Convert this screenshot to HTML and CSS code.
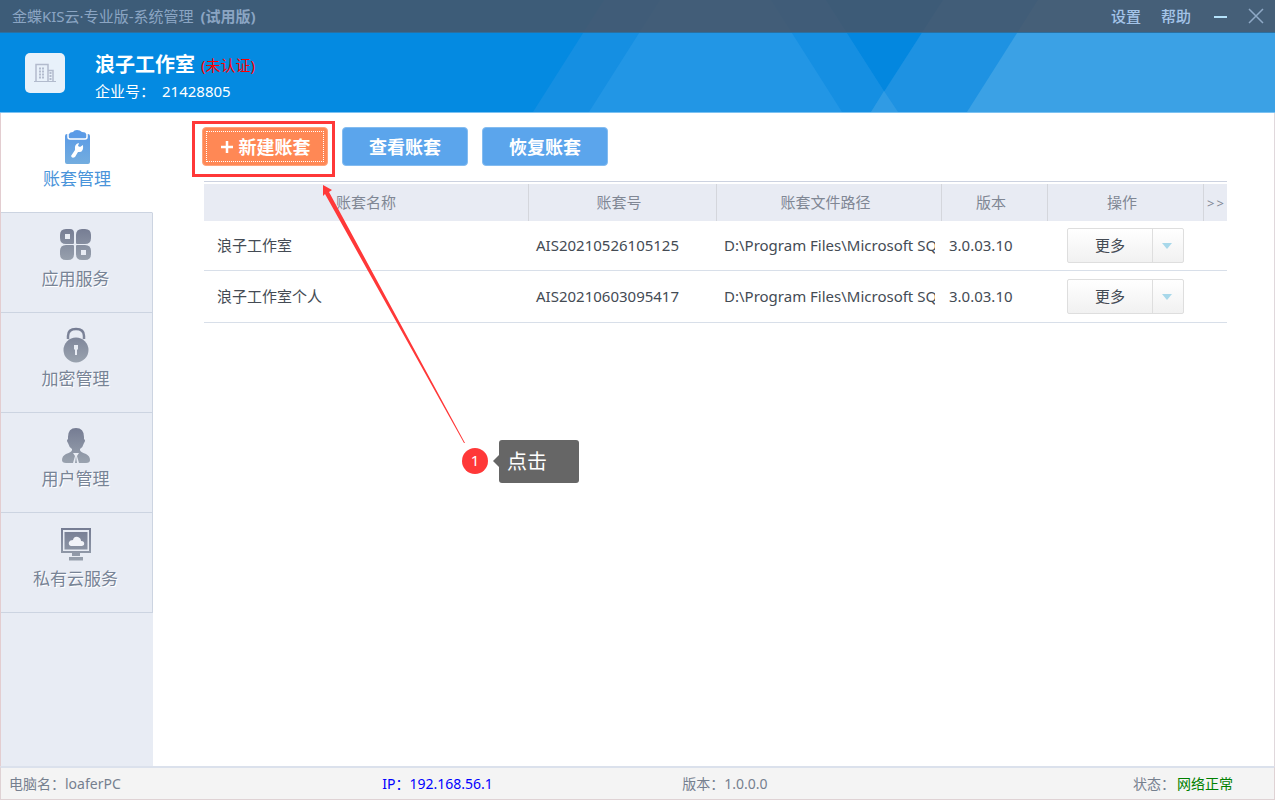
FILE: index.html
```html
<!DOCTYPE html>
<html lang="zh-CN">
<head>
<meta charset="utf-8">
<title>金蝶KIS云·专业版-系统管理</title>
<link rel="stylesheet" href="styles.css">
</head>
<body>
<div class="app">
  <header class="header">
    <svg class="header-art" viewBox="0 0 1275 112" preserveAspectRatio="xMaxYMid slice" aria-hidden="true">
      <polygon points="604,0 826,0 898,112 533,112" fill="#158fe2"/>
      <polygon points="660,0 771,0 842,112 589,112" fill="#2296e5"/>
      <polygon points="826,0 943,0 884,91" fill="#0387df"/>
      <polygon points="943,0 1275,0 1275,112 871,112" fill="#1e92e2"/>
      <polygon points="884,91 898,112 871,112" fill="#309be4"/>
      <polygon points="1038,0 1275,0 1275,112 967,112" fill="#3ba1e5"/>
    </svg>
    <div class="titlebar">
      <div class="title">金蝶KIS云·专业版-系统管理<b class="trial">(试用版)</b></div>
      <nav class="window-menu">
        <button class="menu-button">设置</button>
        <button class="menu-button">帮助</button>
        <button class="window-button" aria-label="最小化"><svg width="16" height="16"><path d="M1 9h13" stroke="#b5e2fa" stroke-width="2"/></svg></button>
        <button class="window-button close" aria-label="关闭"><svg width="16" height="16"><path d="M1 1l14 14M15 1L1 15" stroke="#8fa9c6" stroke-width="1.5"/></svg></button>
      </nav>
    </div>
    <div class="company">
      <div class="company-logo">
        <svg width="22" height="20" viewBox="0 0 22 20" fill="none" stroke="#b2bbcd"><path d="M2 18V1.500h12V18M14 7.500h5V18" stroke-width="1.500"/><path d="M0 18.500h22"/><path d="M5 5.500h6M5 8.500h6M5 11.500h6M5 14.500h6" stroke-width="2" stroke-dasharray="2 1"/><path d="M16.500 9v2M16.500 12v2M16.500 15v2" stroke-width="2"/></svg>
      </div>
      <div>
        <h1 class="company-name">浪子工作室<span class="unverified">(未认证)</span></h1>
        <div class="company-id"><span>企业号：</span><span>21428805</span></div>
      </div>
    </div>
  </header>

  <div class="body">
    <svg width="0" height="0" class="defs" aria-hidden="true"><defs>
      <linearGradient id="steel" x1="0" y1="0" x2="0" y2="36" gradientUnits="userSpaceOnUse"><stop offset="0" stop-color="#747b92"/><stop offset="1" stop-color="#9aa3af"/></linearGradient>
      <linearGradient id="azure" x1="0" y1="0" x2="0" y2="1"><stop offset="0" stop-color="#5b9be6"/><stop offset="1" stop-color="#73addf"/></linearGradient>
    </defs></svg>
    <nav class="sidebar">
      <button class="side-item active">
        <svg width="36" height="36" viewBox="0 0 36 36"><path d="M7 4h22q2 0 2 2v26q0 2-2 2H8q-2 0-2-2V6q0-2 2-2" fill="url(#azure)"/><path d="M9 3v4q0 2 2 2h15q2 0 2-2V3" fill="none" stroke="#fff" stroke-width="1.500"/><path d="M10 6V4q1-2 4-2 1-2 4-2t5 2q4 0 4 2v2q-1 1-2 1H12q-2 0-2-1z" fill="#5b9be6"/><path d="M20 13q-5 1-4 7l-4 6q1 3 4 1l3-5q6 1 5-7l-3 2-2-1 1-3z" fill="#fff"/></svg>
        <span>账套管理</span>
      </button>
      <button class="side-item">
        <svg width="36" height="36" viewBox="0 0 36 36" fill="url(#steel)"><path fill-rule="evenodd" d="M8 2h4q4 0 4 4v10q0 1-1 1H8q-6 0-6-6V8q0-6 6-6zm-1 5v5h5V7z"/><path d="M18 16V8q0-6 6-6h3q6 0 6 6v3q0 6-6 6h-8q-1 0-1-1z"/><path d="M16 19v8q0 6-6 6H8q-6 0-6-6v-3q0-6 6-6h7q1 0 1 1z"/><path fill-rule="evenodd" d="M18 19q0-1 1-1h8q6 0 6 6v3q0 6-6 6h-3q-6 0-6-6zm5 4v5h5v-5z"/></svg>
        <span>应用服务</span>
      </button>
      <button class="side-item">
        <svg width="36" height="36" viewBox="0 0 36 36"><path d="M10 12V9q0-7 8-7t8 7v3" fill="none" stroke="url(#steel)" stroke-width="2.500"/><circle cx="18" cy="23" r="12.500" fill="url(#steel)"/><path d="M16 18h4v4l-1 1v5h-2v-5l-1-1z" fill="#e8ecf4"/></svg>
        <span>加密管理</span>
      </button>
      <button class="side-item">
        <svg width="36" height="36" viewBox="0 0 36 36"><path d="M18 1q8 0 8 9v2q2 1 0 4-1 4-4 6v1q0 2 6 4 4 2 4 6 0 3-4 3H8q-4 0-4-3 0-4 4-6 6-2 6-4v-1q-3-2-4-6-2-3 0-4v-2q0-9 8-9z" fill="url(#steel)"/><path d="M15 26h6l-2 3 2 7h-6l2-7z" fill="#e8ecf4"/><path d="M18 29l1 7h-2z" fill="#9aa3af"/></svg>
        <span>用户管理</span>
      </button>
      <button class="side-item">
        <svg width="36" height="36" viewBox="0 0 36 36"><path d="M4 2h28v23H4z" fill="none" stroke="url(#steel)" stroke-width="2"/><path d="M6.500 5h23v17.500h-23z" fill="url(#steel)"/><path d="M13 19q-3-1-2-4 1-2 4-2 1-4 5-3 3 1 3 4 4 0 3 4l-2 1z" fill="#f1f3f8"/><path d="M14 26h8v3h-8zM11 30h14v3.500H11z" fill="url(#steel)"/></svg>
        <span>私有云服务</span>
      </button>
    </nav>

    <main class="content">
      <div class="toolbar">
        <button class="action primary"><svg width="14" height="14"><path d="M7 1v12M1 7h12" stroke="#fff" stroke-width="2.500"/></svg>新建账套</button>
        <button class="action">查看账套</button>
        <button class="action">恢复账套</button>
      </div>
      <div class="table-wrap">
        <table class="accounts">
          <colgroup><col class="c-name"><col class="c-id"><col class="c-path"><col class="c-version"><col class="c-action"><col class="c-more"></colgroup>
          <thead><tr><th>账套名称</th><th>账套号</th><th>账套文件路径</th><th>版本</th><th>操作</th><th class="expand">&gt;&thinsp;&gt;</th></tr></thead>
          <tbody>
            <tr><td>浪子工作室</td><td>AIS20210526105125</td><td><div class="clip">D:\Program Files\Microsoft SQ</div></td><td>3.0.03.10</td><td colspan="2"><div class="split"><button class="split-main">更多</button><button class="split-arrow" aria-label="展开"><svg width="10" height="6"><path d="M0 0h10L5 6z" fill="#a8d8ea"/></svg></button></div></td></tr>
            <tr><td>浪子工作室个人</td><td>AIS20210603095417</td><td><div class="clip">D:\Program Files\Microsoft SQ</div></td><td>3.0.03.10</td><td colspan="2"><div class="split"><button class="split-main">更多</button><button class="split-arrow" aria-label="展开"><svg width="10" height="6"><path d="M0 0h10L5 6z" fill="#a8d8ea"/></svg></button></div></td></tr>
          </tbody>
        </table>
      </div>
    </main>
  </div>

  <footer class="status">
    <span>电脑名：loaferPC</span>
    <span class="ip">IP：192.168.56.1</span>
    <span>版本：1.0.0.0</span>
    <span class="network">状态：<span class="ok">网络正常</span></span>
  </footer>

  <div class="guide-box"></div>
  <svg class="guide-arrow" width="150" height="262" aria-hidden="true"><path d="M3 1L12 6 9 8 145 259 144 259 5 10 3 12z" fill="#ff3838"/></svg>
  <div class="guide-step">1</div>
  <div class="guide-tip">点击</div>
</div>
</body>
</html>
```
FILE: styles.css
```css
* { box-sizing: border-box; }
body {
  margin: 0;
  font: 15px/20px "Noto Sans", "Noto Sans CJK SC", sans-serif;
  color: #444b54;
}
button {
  font: inherit;
  color: inherit;
  margin: 0;
  padding: 0;
  border: 0;
  background: none;
}
.app {
  position: relative;
  display: flex;
  flex-direction: column;
  min-height: 100vh;
  background: #fff;
}
.app > .body { border-left: 1px solid #e3cdd0; border-right: 1px solid #e0d8dc; }

/* Header */
.header {
  position: relative;
  background: #048ae1;
  border-bottom: 1px solid #7cc2f2;
}
.header-art { position: absolute; top: 0; left: 0; width: 100%; height: 100%; }
.titlebar {
  position: relative;
  display: flex;
  justify-content: space-between;
  align-items: center;
  height: 33px;
  padding: 0 11px 0 12px;
  background: rgba(72, 84, 101, 0.85);
  border-bottom: 1px solid #2c6f9f;
  color: #8ba5c3;
}
.trial { margin-left: 7px; }
.window-menu { display: flex; align-items: center; color: #a4c4e8; }
.menu-button { margin-right: 20px; font-weight: 500; }
.menu-button + .window-button { margin-left: 2px; }
.window-button { display: flex; margin-right: 20px; }
.window-button.close { margin: 0 0 0 -1px; }
.company {
  position: relative;
  display: flex;
  gap: 30px;
  height: 79px;
  padding: 20px 25px 0;
  color: #fff;
}
.company-logo {
  display: flex;
  align-items: center;
  justify-content: center;
  width: 40px;
  height: 40px;
  border-radius: 5px;
  background: #e8f1fa;
}
.company-name {
  display: flex;
  align-items: center;
  margin: 0;
  font-size: 20px;
  line-height: 24px;
}
.unverified { margin-left: 6px; font-size: 15px; font-weight: 400; color: #f00; }
.company-id { display: flex; gap: 7px; margin-top: 4px; }

/* Sidebar */
.body { flex: 1; display: flex; }
.defs { position: absolute; }
.sidebar {
  display: flex;
  flex-direction: column;
  width: 152px;
  flex-shrink: 0;
  background: #e8ecf4;
}
.side-item {
  display: flex;
  flex-direction: column;
  align-items: center;
  gap: 3px;
  height: 100px;
  padding: 14px 2px 0 0;
  font-size: 17px;
  line-height: 26px;
  color: #788496;
  border-right: 1px solid #ccd4e1;
  border-bottom: 1px solid #ccd4e1;
}
.side-item span { text-shadow: 1px 1px 0 #fff; }
.side-item.active {
  padding: 17px 0 0 1px;
  gap: 0;
  background: #fff;
  border-right-color: #fff;
  color: #4a94da;
}

/* Content */
.content { flex: 1; min-width: 0; padding: 14px 47px 0 49px; }
.toolbar { display: flex; gap: 14px; }
.action {
  display: flex;
  align-items: center;
  justify-content: center;
  gap: 5px;
  width: 126px;
  height: 39px;
  padding-top: 1px;
  border: 1px solid #84bcf0;
  border-radius: 4px;
  background: #5ba5ec;
  color: #fff;
  font-size: 18px;
  font-weight: 700;
}
.action.primary {
  background: #ff8855;
  border-color: #ffa47c;
  outline: 1px dotted #fff;
  outline-offset: -5px;
}
.table-wrap { margin: 15px 0 0 2px; padding-top: 2px; border-top: 1px solid #ccd2e0; }
.accounts { width: 100%; table-layout: fixed; border-collapse: separate; border-spacing: 0; }
.c-name { width: 325px; }
.c-id { width: 188px; }
.c-path { width: 225px; }
.c-version { width: 106px; }
.c-more { width: 23px; }
.accounts th {
  height: 37px;
  padding: 0 7px 2px 0;
  background: #e8ebf3;
  border-right: 1px solid #d4d6dc;
  font-weight: 400;
  color: #808794;
}
.accounts th:first-child { padding: 0 0 2px; }
.accounts th.expand { padding: 0; border: 0; font-size: 13px; white-space: nowrap; }
.accounts td { height: 50px; padding: 0 7px 2px; border-bottom: 1px solid #d8dfe9; }
.accounts tr + tr td { height: 52px; }
.accounts td:first-child { padding-left: 13px; }
.accounts td:last-child { padding: 0 0 0 19px; }
.clip { overflow: hidden; white-space: nowrap; }
.split {
  display: flex;
  width: 117px;
  height: 35px;
  border: 1px solid #dedede;
  border-radius: 2px;
  background: linear-gradient(#fff, #f1f1f1);
}
.split-main { flex: 1; padding-bottom: 2px; }
.split-arrow {
  display: flex;
  align-items: center;
  justify-content: center;
  width: 31px;
  padding-right: 2px;
  border-left: 1px solid #dedede;
}

/* Status bar */
.status {
  display: grid;
  grid-template-columns: 30.500% 24.500% 1fr auto;
  align-items: center;
  height: 34px;
  padding: 0 41px 0 8px;
  border: 1px solid #dfd2d4;
  border-top: 2px solid #dbe1ec;
  background: #f4f4f4;
  font-size: 14px;
  color: #76808f;
}
.ip { color: #00f; }
.ok { margin-left: 2px; color: #008000; }

/* Walkthrough marks drawn over the window */
.guide-box {
  position: absolute;
  left: 192px;
  top: 121px;
  width: 143px;
  height: 56px;
  border: 3px solid #ff3838;
}
.guide-arrow { position: absolute; left: 320px; top: 184px; }
.guide-step {
  position: absolute;
  left: 462px;
  top: 448px;
  width: 26px;
  height: 26px;
  border-radius: 50%;
  background: #ff3838;
  color: #fff;
  line-height: 25px;
  text-align: center;
}
.guide-tip {
  position: absolute;
  left: 499px;
  top: 440px;
  width: 80px;
  padding: 0 8px;
  border-radius: 3px;
  background: #666;
  color: #fff;
  font-size: 20px;
  line-height: 43px;
}
.guide-tip::before {
  content: "";
  position: absolute;
  left: -6px;
  top: 15px;
  border: solid transparent;
  border-width: 6px 6px 6px 0;
  border-right-color: #666;
}
```
